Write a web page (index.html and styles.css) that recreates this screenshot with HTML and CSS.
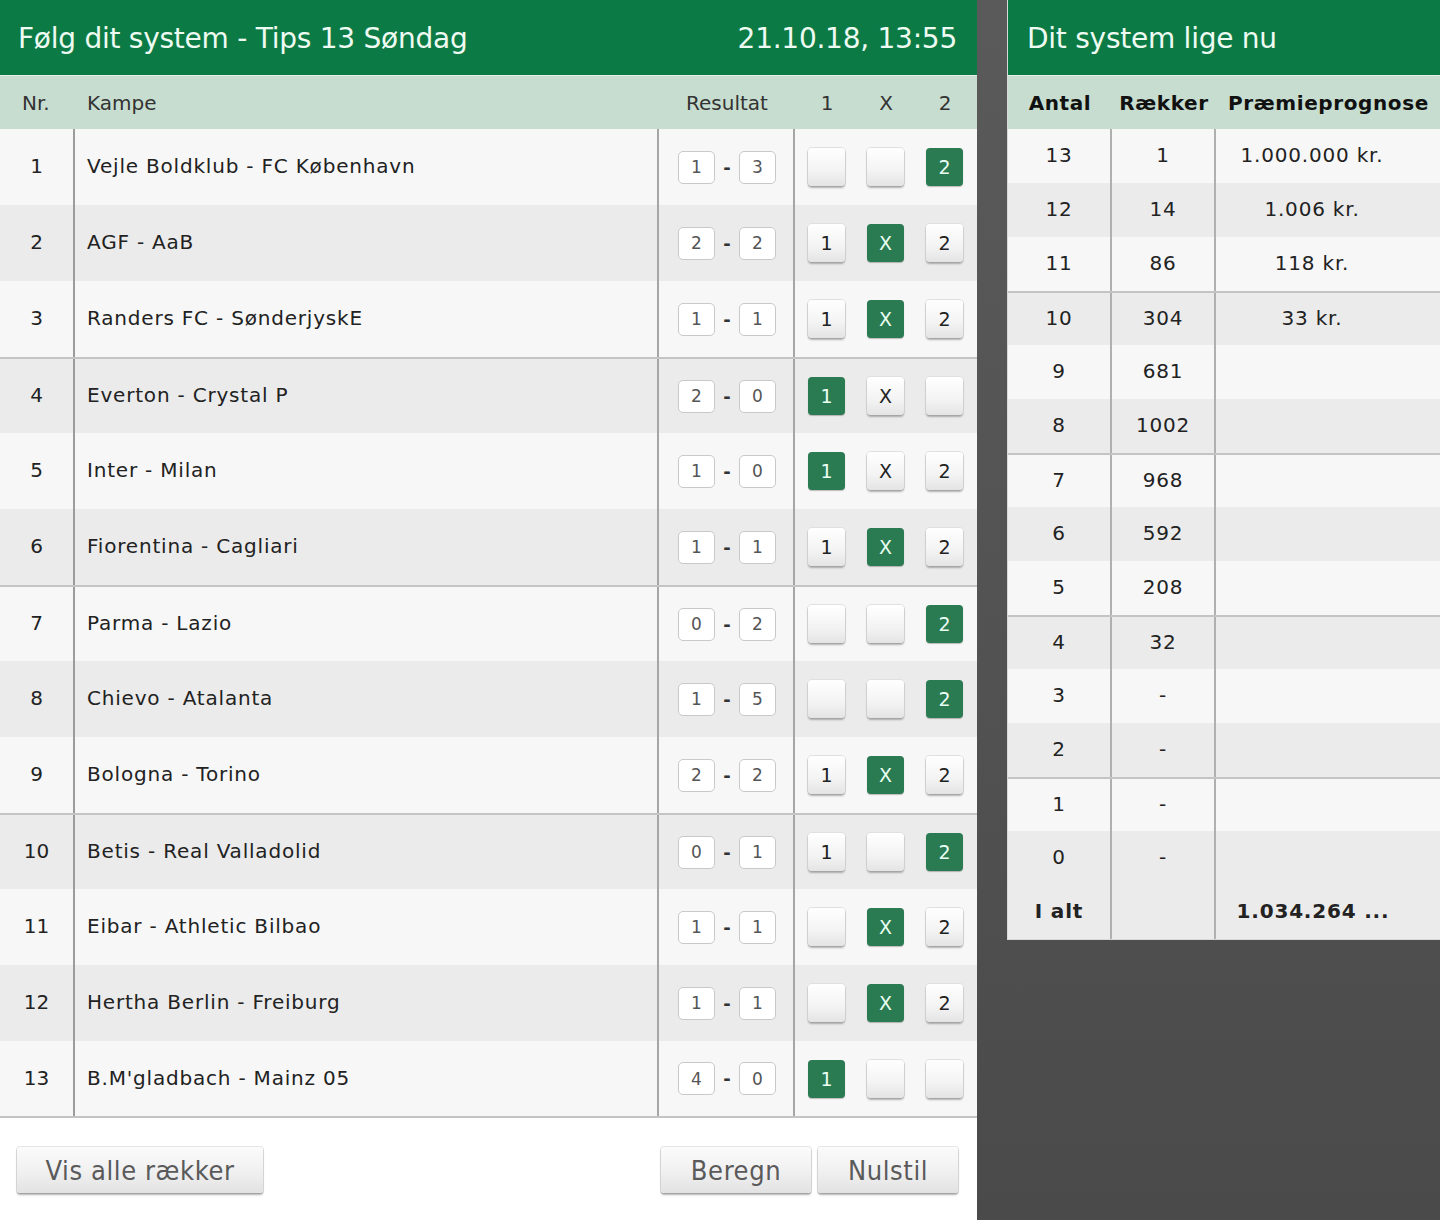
FILE: index.html
```html
<!DOCTYPE html>
<html lang="da">
<head>
<meta charset="utf-8">
<title>Følg dit system</title>
<link rel="stylesheet" href="styles.css">
</head>
<body>
<div class="page">
  <section class="panel main">
    <header class="panel-head">
      <span>Følg dit system - Tips 13 Søndag</span>
      <span>21.10.18, 13:55</span>
    </header>
    <div class="thead grid">
      <div class="c-nr">Nr.</div>
      <div class="c-match">Kampe</div>
      <div class="c-res">Resultat</div>
      <div class="c-pick h"><span>1</span><span>X</span><span>2</span></div>
    </div>
    <div class="tbody">
      <div class="row grid odd"><div class="c-nr">1</div><div class="c-match">Vejle Boldklub - FC København</div><div class="c-res"><span class="score">1</span><span class="dash">-</span><span class="score">3</span></div><div class="c-pick"><span class="b"></span><span class="b"></span><span class="b on">2</span></div></div>
      <div class="row grid even"><div class="c-nr">2</div><div class="c-match">AGF - AaB</div><div class="c-res"><span class="score">2</span><span class="dash">-</span><span class="score">2</span></div><div class="c-pick"><span class="b">1</span><span class="b on">X</span><span class="b">2</span></div></div>
      <div class="row grid odd"><div class="c-nr">3</div><div class="c-match">Randers FC - SønderjyskE</div><div class="c-res"><span class="score">1</span><span class="dash">-</span><span class="score">1</span></div><div class="c-pick"><span class="b">1</span><span class="b on">X</span><span class="b">2</span></div></div>
      <div class="row grid even sep"><div class="c-nr">4</div><div class="c-match">Everton - Crystal P</div><div class="c-res"><span class="score">2</span><span class="dash">-</span><span class="score">0</span></div><div class="c-pick"><span class="b on">1</span><span class="b">X</span><span class="b"></span></div></div>
      <div class="row grid odd"><div class="c-nr">5</div><div class="c-match">Inter - Milan</div><div class="c-res"><span class="score">1</span><span class="dash">-</span><span class="score">0</span></div><div class="c-pick"><span class="b on">1</span><span class="b">X</span><span class="b">2</span></div></div>
      <div class="row grid even"><div class="c-nr">6</div><div class="c-match">Fiorentina - Cagliari</div><div class="c-res"><span class="score">1</span><span class="dash">-</span><span class="score">1</span></div><div class="c-pick"><span class="b">1</span><span class="b on">X</span><span class="b">2</span></div></div>
      <div class="row grid odd sep"><div class="c-nr">7</div><div class="c-match">Parma - Lazio</div><div class="c-res"><span class="score">0</span><span class="dash">-</span><span class="score">2</span></div><div class="c-pick"><span class="b"></span><span class="b"></span><span class="b on">2</span></div></div>
      <div class="row grid even"><div class="c-nr">8</div><div class="c-match">Chievo - Atalanta</div><div class="c-res"><span class="score">1</span><span class="dash">-</span><span class="score">5</span></div><div class="c-pick"><span class="b"></span><span class="b"></span><span class="b on">2</span></div></div>
      <div class="row grid odd"><div class="c-nr">9</div><div class="c-match">Bologna - Torino</div><div class="c-res"><span class="score">2</span><span class="dash">-</span><span class="score">2</span></div><div class="c-pick"><span class="b">1</span><span class="b on">X</span><span class="b">2</span></div></div>
      <div class="row grid even sep"><div class="c-nr">10</div><div class="c-match">Betis - Real Valladolid</div><div class="c-res"><span class="score">0</span><span class="dash">-</span><span class="score">1</span></div><div class="c-pick"><span class="b">1</span><span class="b"></span><span class="b on">2</span></div></div>
      <div class="row grid odd"><div class="c-nr">11</div><div class="c-match">Eibar - Athletic Bilbao</div><div class="c-res"><span class="score">1</span><span class="dash">-</span><span class="score">1</span></div><div class="c-pick"><span class="b"></span><span class="b on">X</span><span class="b">2</span></div></div>
      <div class="row grid even"><div class="c-nr">12</div><div class="c-match">Hertha Berlin - Freiburg</div><div class="c-res"><span class="score">1</span><span class="dash">-</span><span class="score">1</span></div><div class="c-pick"><span class="b"></span><span class="b on">X</span><span class="b">2</span></div></div>
      <div class="row grid odd last"><div class="c-nr">13</div><div class="c-match">B.M'gladbach - Mainz 05</div><div class="c-res"><span class="score">4</span><span class="dash">-</span><span class="score">0</span></div><div class="c-pick"><span class="b on">1</span><span class="b"></span><span class="b"></span></div></div>
    </div>
    <footer class="foot">
      <button class="btn wide">Vis alle rækker</button>
      <div class="foot-right">
        <button class="btn calc">Beregn</button>
        <button class="btn reset">Nulstil</button>
      </div>
    </footer>
  </section>

  <section class="panel side">
    <header class="panel-head"><span>Dit system lige nu</span></header>
    <div class="sthead sgrid">
      <div>Antal</div><div>Rækker</div><div>Præmieprognose</div>
    </div>
    <div class="srow sgrid odd"><div>13</div><div>1</div><div>1.000.000 kr.</div></div>
    <div class="srow sgrid even"><div>12</div><div>14</div><div>1.006 kr.</div></div>
    <div class="srow sgrid odd"><div>11</div><div>86</div><div>118 kr.</div></div>
    <div class="srow sgrid even sep"><div>10</div><div>304</div><div>33 kr.</div></div>
    <div class="srow sgrid odd"><div>9</div><div>681</div><div></div></div>
    <div class="srow sgrid even"><div>8</div><div>1002</div><div></div></div>
    <div class="srow sgrid odd sep"><div>7</div><div>968</div><div></div></div>
    <div class="srow sgrid even"><div>6</div><div>592</div><div></div></div>
    <div class="srow sgrid odd"><div>5</div><div>208</div><div></div></div>
    <div class="srow sgrid even sep"><div>4</div><div>32</div><div></div></div>
    <div class="srow sgrid odd"><div>3</div><div>-</div><div></div></div>
    <div class="srow sgrid even"><div>2</div><div>-</div><div></div></div>
    <div class="srow sgrid odd sep"><div>1</div><div>-</div><div></div></div>
    <div class="srow sgrid even"><div>0</div><div>-</div><div></div></div>
    <div class="srow sgrid even total"><div>I alt</div><div></div><div>1.034.264 ...</div></div>
  </section>
</div>
</body>
</html>
```

FILE: styles.css
```css
* { box-sizing: border-box; }
html, body { margin: 0; padding: 0; }
body {
  width: 1440px;
  height: 1220px;
  overflow: hidden;
  background: linear-gradient(180deg, #5a5a5a 0%, #525252 55%, #4a4a4a 100%);
  font-family: "DejaVu Sans", Verdana, sans-serif;
  color: #222;
}
.page {
  display: flex;
  align-items: flex-start;
  gap: 30px;
}
.panel { background: #f7f7f7; }
.main { width: 977px; height: 1220px; background: #fff; }
.side { width: 433px; border: 1px solid #d8d8d8; border-top: 0; border-right: 0; }

.panel-head {
  height: 76px;
  background: #0c7a45;
  color: #eefbf2;
  font-size: 28px;
  display: flex;
  align-items: center;
  justify-content: space-between;
  padding: 2px 20px 0 18px;
  border-bottom: 1px solid #e4efe8;
  letter-spacing: -0.25px;
}
.side .panel-head { padding-left: 19px; }

/* left table */
.grid {
  display: grid;
  grid-template-columns: 75px 584px 136px 182px;
}
.thead {
  height: 53px;
  background: #c7ddcf;
  font-size: 20px;
  color: #333;
  align-items: center;
}
.thead .c-nr { padding-left: 22px; }
.thead .c-match { padding-left: 12px; }
.thead .c-res { text-align: center; padding-right: 0; }
.c-pick.h { display: flex; padding-left: 25px; gap: 45px; }
.c-pick.h span { width: 14px; text-align: center; }

.row { height: 76px; font-size: 20px; }
.row.odd { background: #f7f7f7; }
.row.even { background: #ebebeb; }
.row.sep { border-top: 2px solid #c4c4c4; }
.row.last { border-bottom: 2px solid #c4c4c4; height: 77px; }
.row > div { display: flex; align-items: center; padding-bottom: 2px; }
.row .c-nr { justify-content: center; border-right: 2px solid #9c9c9c; }
.row .c-match { padding-left: 12px; border-right: 2px solid #a6a6a6; letter-spacing: 0.8px; }
.row .c-res { padding-left: 19px; border-right: 2px solid #a6a6a6; gap: 0; padding-bottom: 0; }
.score {
  width: 37px;
  height: 33px;
  border: 1px solid #c9c9c9;
  border-radius: 5px;
  background: #fff;
  display: flex;
  align-items: center;
  justify-content: center;
  font-size: 17px;
  color: #555;
}
.dash { width: 24px; text-align: center; font-size: 18px; font-weight: bold; color: #333; }
.row .c-pick { padding-left: 13px; gap: 22px; padding-bottom: 0; }
.b {
  width: 37px;
  height: 38px;
  border-radius: 4px;
  background: linear-gradient(180deg, #ffffff 0%, #f3f3f3 60%, #e4e4e4 100%);
  box-shadow: 0 2px 2px rgba(0,0,0,0.28), 0 0 0 1px #e0e0e0;
  display: flex;
  align-items: center;
  justify-content: center;
  font-size: 19px;
  color: #222;
}
.b.on {
  background: #2a7a52;
  color: #eafff2;
  box-shadow: 0 1px 1px rgba(0,0,0,0.25);
}

/* footer */
.foot {
  display: flex;
  justify-content: space-between;
  padding: 29px 19px 0 17px;
}
.foot-right { display: flex; gap: 7px; }
.btn {
  height: 46px;
  border: 0;
  border-radius: 3px;
  background: linear-gradient(180deg, #fbfbfb 0%, #f0f0f0 55%, #e2e2e2 100%);
  box-shadow: 0 2px 2px rgba(0,0,0,0.3), 0 0 0 1px #e6e6e6;
  font-family: "DejaVu Sans Condensed", "DejaVu Sans", sans-serif;
  font-size: 27px;
  letter-spacing: 0.6px;
  color: #5a5a5a;
  padding: 0;
}
.btn.wide { width: 246px; }
.btn.calc { width: 150px; }
.btn.reset { width: 140px; }

/* right table */
.sgrid {
  display: grid;
  grid-template-columns: 104px 104px 1fr;
}
.sthead {
  height: 53px;
  background: #c7ddcf;
  font-weight: bold;
  font-size: 20px;
  letter-spacing: 0.6px;
  color: #111;
  align-items: center;
  text-align: center;
}
.sthead div:nth-child(3) { text-align: left; padding-left: 12px; }
.srow { height: 54px; font-size: 20px; letter-spacing: 0.8px; }
.srow.odd { background: #f7f7f7; }
.srow.even { background: #ebebeb; }
.srow.sep { border-top: 2px solid #c4c4c4; }
.srow > div {
  display: flex;
  align-items: center;
  justify-content: center;
  padding-bottom: 2px;
}
.srow > div:nth-child(1) { border-right: 2px solid #b0b0b0; }
.srow > div:nth-child(2) { border-right: 2px solid #b0b0b0; }
.srow > div:nth-child(3) { padding-right: 32px; }
.srow.total { font-weight: bold; height: 54px; }
.srow.total > div:nth-child(3) { padding-right: 30px; }
```
